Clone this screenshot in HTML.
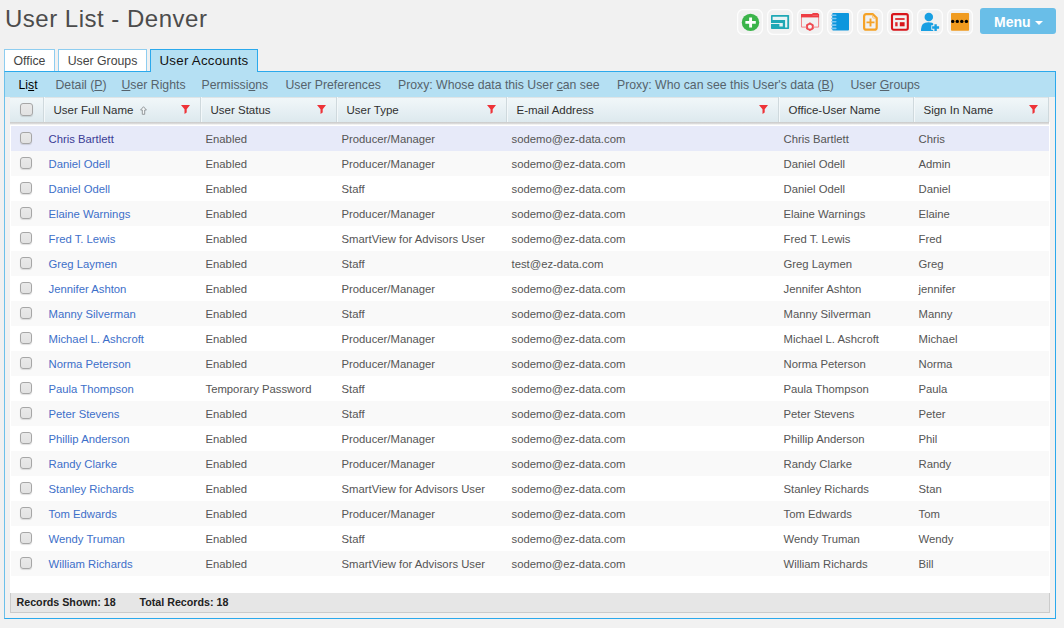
<!DOCTYPE html>
<html><head><meta charset="utf-8"><title>User List - Denver</title>
<style>
*{box-sizing:border-box;margin:0;padding:0}
html,body{width:1064px;height:628px;overflow:hidden}
body{background:#f1f1f1;font-family:"Liberation Sans",sans-serif;font-size:12px;color:#555;position:relative}
h1{position:absolute;left:5px;top:4px;font-size:24px;font-weight:normal;color:#4c4c4c;line-height:30px;white-space:nowrap;letter-spacing:0.5px}
.tools{position:absolute;left:737px;top:9px;width:236px;height:26px}
.menu{position:absolute;left:980px;top:8px;width:76px;height:26px;background:#69bee8;border-radius:3px;color:#fff;font-weight:bold;font-size:14px;line-height:26px;padding:1px 0 0 14px}
.menu i{position:absolute;left:54.8px;top:13px;border:4px solid transparent;border-top:4px solid #fff;border-bottom:0}
.tab{position:absolute;top:49px;height:23px;border:1px solid #8ecdf0;border-bottom:0;background:#fff;font-size:12.3px;line-height:22px;color:#444;text-align:center;white-space:nowrap}
.tab.act{background:#b5e0f3;border-color:#2ba9ec;color:#111;z-index:2;font-size:13.3px;letter-spacing:0.25px}
.panel{position:absolute;left:4px;top:71px;width:1052px;height:548px;border:1px solid #2ba9ec;border-left-color:#6cc0ea}
.sub{position:absolute;left:0;top:0;width:1050px;height:25px;background:#b5e0f3;white-space:nowrap}
.sub span{position:absolute;top:0;line-height:27px;font-size:12.25px;color:#56636c}
.sub span.on{color:#000}
.hdr{position:absolute;left:5px;top:25px;width:1039px;height:25px;background:linear-gradient(#f1f7f9,#dde9ee);border-top:1px solid #dfe5e7}
.hdr .h{position:absolute;top:-1px;height:25px;line-height:26px;border-left:1px solid #cfd9dd;padding-left:9.5px;color:#303030;font-size:11.5px;white-space:nowrap;box-shadow:inset 1px 0 0 #f3f8fa}
.hdr .fn{position:absolute;top:7px}
.hdr .srt{position:absolute;left:95.5px;top:9px}
.shadow{position:absolute;left:5px;top:50px;width:1039px;height:3px;background:linear-gradient(#c9c9c9,#dcdcdc 55%,#fdfdfd)}
.grid{position:absolute;left:5px;top:50px;width:1040px;height:471px;background:#fff;padding:4px 1px 0}
.row{position:relative;height:25px;line-height:26px;background:#fff;white-space:nowrap}
.row.alt{background:#f9f9f9}
.row.sel{background:#e7eaf9}
.cb{position:absolute;left:9px;top:6px;width:12px;height:12px;border:1px solid #a6a6a6;border-radius:3px;background:linear-gradient(#e9e9e9,#e2e2e2);box-shadow:0 1px 1px rgba(0,0,0,.12)}
.hdr .cb{left:10px;top:5px;width:13px;height:13px}
.c{position:absolute;top:0;font-size:11.3px;color:#555}
.c1{left:37.5px;color:#3d6fc9} .sel .c1{color:#3b3c96}
.c2{left:194.5px} .c3{left:330.5px} .c4{left:500.5px} .c5{left:772.5px} .c6{left:907.5px}
.foot{position:absolute;left:5px;top:521px;width:1040px;height:20px;background:#e6e6e6;border:1px solid #cbcbcb;border-top:0;font-weight:bold;color:#222;font-size:10.7px;line-height:19px;white-space:nowrap}
.foot span{position:absolute;top:0}
</style></head><body>
<h1>User List - Denver</h1>
<div class="tools">
<svg width="236" height="26" viewBox="0 0 236 26">
 <g fill="none" stroke="#fdfdfd" stroke-width="1.3">
  <rect x="0.6" y="0.6" width="24.8" height="24.8" rx="5.5"/>
  <rect x="30.6" y="0.6" width="24.8" height="24.8" rx="5.5"/>
  <rect x="60.6" y="0.6" width="24.8" height="24.8" rx="5.5"/>
  <rect x="90.6" y="0.6" width="24.8" height="24.8" rx="5.5"/>
  <rect x="120.6" y="0.6" width="24.8" height="24.8" rx="5.5"/>
  <rect x="150.6" y="0.6" width="24.8" height="24.8" rx="5.5"/>
  <rect x="180.6" y="0.6" width="24.8" height="24.8" rx="5.5"/>
  <rect x="210.6" y="0.6" width="24.8" height="24.8" rx="5.5"/>
 </g>
 <!-- 1 add -->
 <circle cx="13.5" cy="13.4" r="8.7" fill="#3bb44a"/>
 <path d="M8.4 13.4H18.8M13.6 8.5V18.6" stroke="#fff" stroke-width="2.9" fill="none"/>
 <!-- 2 windows -->
 <g transform="translate(30 0)">
  <rect x="4" y="5.9" width="18.1" height="14" rx="0.7" fill="#1fa8b5"/>
  <path d="M5.6 7.8H20.3V18.6H18.1V11H5.6Z" fill="#e9f4f5"/>
  <path d="M4 14.1H15.8V17.6H12.4V15.1H4Z" fill="#e4f2f4"/>
 </g>
 <!-- 3 folder gear -->
 <g transform="translate(60 0)">
  <path d="M4.5 8V18.1H9.5M16.3 18.1H21.6V8" stroke="#f3777b" stroke-width="0.9" fill="none"/>
  <path d="M4 5H22.1V8.4H4Z" fill="#ee3d43"/>
  <path d="M15.2 5V4.8Q15.2 3.9 16.1 3.9H20.2Q21.2 3.9 21.6 5Z" fill="#ee3d43"/>
  <path d="M15.5 6.4H21" stroke="#f47478" stroke-width="0.7"/>
  <circle cx="12.9" cy="17.7" r="2.9" fill="none" stroke="#ee4a50" stroke-width="1.8"/>
  <path d="M12.9 13.6V21.8M9.35 15.65L16.45 19.75M16.45 15.65L9.35 19.75" stroke="#ee4a50" stroke-width="1.7"/>
  <circle cx="12.9" cy="17.7" r="2" fill="#f6f6f6"/>
 </g>
 <!-- 4 notebook -->
 <g transform="translate(90 0)">
  <rect x="5.2" y="4.1" width="16.8" height="17.3" rx="0.9" fill="#0c96dd"/>
  <g fill="#7cc5ee">
   <rect x="4" y="5.4" width="5.6" height="1.6" rx=".8"/>
   <rect x="4" y="8.7" width="5.6" height="1.6" rx=".8"/>
   <rect x="4" y="12" width="5.6" height="1.6" rx=".8"/>
   <rect x="4" y="15.3" width="5.6" height="1.6" rx=".8"/>
   <rect x="4" y="18.6" width="5.6" height="1.6" rx=".8"/>
  </g>
 </g>
 <!-- 5 doc plus -->
 <g transform="translate(120 0)">
  <path d="M9.3 5.2H15.9L19.7 9V18.4Q19.7 20.7 17.4 20.7H9.3Q7.1 20.7 7.1 18.4V7.4Q7.1 5.2 9.3 5.2Z" fill="none" stroke="#f5a226" stroke-width="2.2" stroke-linejoin="round"/>
  <path d="M15.6 5.6V8Q15.6 9.2 16.8 9.2H19.2" fill="none" stroke="#f8bd68" stroke-width="0.9"/>
  <path d="M13.5 9.4V17.4M9.5 13.4H17.5" stroke="#f5a226" stroke-width="1.9"/>
 </g>
 <!-- 6 layout -->
 <g transform="translate(150 0)">
  <rect x="5" y="5.1" width="15.8" height="15.6" rx="1.6" fill="none" stroke="#d8151b" stroke-width="2.1"/>
  <rect x="8.2" y="9.1" width="9.4" height="1.8" fill="#e0262b"/>
  <rect x="8.2" y="13.2" width="2.4" height="4.1" fill="#e0262b"/>
  <rect x="12.8" y="13.2" width="4.8" height="4.1" fill="#d8151b"/>
 </g>
 <!-- 7 user plus -->
 <g transform="translate(180 0)">
  <circle cx="11.8" cy="7.9" r="4.25" fill="#189fe2"/>
  <path d="M4 22V20.6Q4 13.3 11.4 13.3Q15.6 13.3 17.6 15.4V22Z" fill="#189fe2"/>
  <path d="M14.3 18.5H22.7M18.5 14.3V22.7" stroke="#f1f1f1" stroke-width="4.6"/>
  <path d="M15.1 18.5H22.1M18.6 15.2V21.9" stroke="#189fe2" stroke-width="2.4"/>
 </g>
 <!-- 8 more -->
 <g transform="translate(210 0)">
  <rect x="4" y="4.1" width="18.1" height="17.6" rx="0.8" fill="#f09b1f"/>
  <circle cx="5.7" cy="12.4" r="1.7" fill="#000"/>
  <circle cx="10.3" cy="12.4" r="1.7" fill="#000"/>
  <circle cx="14.8" cy="12.4" r="1.7" fill="#000"/>
  <circle cx="19.4" cy="12.4" r="1.7" fill="#000"/>
 </g>
</svg>

</div>
<div class="menu">Menu<i></i></div>
<div class="tab" style="left:4px;width:51px">Office</div>
<div class="tab" style="left:58px;width:89px">User Groups</div>
<div class="tab act" style="left:150px;width:108px">User Accounts</div>
<div class="panel">
 <div class="sub">
  <span class="on" style="left:13.5px">Li<u>s</u>t</span>
  <span style="left:50.5px">Detail (<u>P</u>)</span>
  <span style="left:116.5px"><u>U</u>ser Rights</span>
  <span style="left:196.5px">Permissi<u>o</u>ns</span>
  <span style="left:280.5px">User Preferences</span>
  <span style="left:393px">Proxy: Whose data this User <u>c</u>an see</span>
  <span style="left:612px">Proxy: Who can see this User's data (<u>B</u>)</span>
  <span style="left:845.5px">User <u>G</u>roups</span>
 </div>
 <div class="grid">
  <div class="row sel"><span class="cb"></span><a class="c c1">Chris Bartlett</a><span class="c c2">Enabled</span><span class="c c3">Producer/Manager</span><span class="c c4">sodemo@ez-data.com</span><span class="c c5">Chris Bartlett</span><span class="c c6">Chris</span></div>
  <div class="row alt"><span class="cb"></span><a class="c c1">Daniel Odell</a><span class="c c2">Enabled</span><span class="c c3">Producer/Manager</span><span class="c c4">sodemo@ez-data.com</span><span class="c c5">Daniel Odell</span><span class="c c6">Admin</span></div>
  <div class="row"><span class="cb"></span><a class="c c1">Daniel Odell</a><span class="c c2">Enabled</span><span class="c c3">Staff</span><span class="c c4">sodemo@ez-data.com</span><span class="c c5">Daniel Odell</span><span class="c c6">Daniel</span></div>
  <div class="row alt"><span class="cb"></span><a class="c c1">Elaine Warnings</a><span class="c c2">Enabled</span><span class="c c3">Producer/Manager</span><span class="c c4">sodemo@ez-data.com</span><span class="c c5">Elaine Warnings</span><span class="c c6">Elaine</span></div>
  <div class="row"><span class="cb"></span><a class="c c1">Fred T. Lewis</a><span class="c c2">Enabled</span><span class="c c3">SmartView for Advisors User</span><span class="c c4">sodemo@ez-data.com</span><span class="c c5">Fred T. Lewis</span><span class="c c6">Fred</span></div>
  <div class="row alt"><span class="cb"></span><a class="c c1">Greg Laymen</a><span class="c c2">Enabled</span><span class="c c3">Staff</span><span class="c c4">test@ez-data.com</span><span class="c c5">Greg Laymen</span><span class="c c6">Greg</span></div>
  <div class="row"><span class="cb"></span><a class="c c1">Jennifer Ashton</a><span class="c c2">Enabled</span><span class="c c3">Producer/Manager</span><span class="c c4">sodemo@ez-data.com</span><span class="c c5">Jennifer Ashton</span><span class="c c6">jennifer</span></div>
  <div class="row alt"><span class="cb"></span><a class="c c1">Manny Silverman</a><span class="c c2">Enabled</span><span class="c c3">Staff</span><span class="c c4">sodemo@ez-data.com</span><span class="c c5">Manny Silverman</span><span class="c c6">Manny</span></div>
  <div class="row"><span class="cb"></span><a class="c c1">Michael L. Ashcroft</a><span class="c c2">Enabled</span><span class="c c3">Producer/Manager</span><span class="c c4">sodemo@ez-data.com</span><span class="c c5">Michael L. Ashcroft</span><span class="c c6">Michael</span></div>
  <div class="row alt"><span class="cb"></span><a class="c c1">Norma Peterson</a><span class="c c2">Enabled</span><span class="c c3">Producer/Manager</span><span class="c c4">sodemo@ez-data.com</span><span class="c c5">Norma Peterson</span><span class="c c6">Norma</span></div>
  <div class="row"><span class="cb"></span><a class="c c1">Paula Thompson</a><span class="c c2">Temporary Password</span><span class="c c3">Staff</span><span class="c c4">sodemo@ez-data.com</span><span class="c c5">Paula Thompson</span><span class="c c6">Paula</span></div>
  <div class="row alt"><span class="cb"></span><a class="c c1">Peter Stevens</a><span class="c c2">Enabled</span><span class="c c3">Staff</span><span class="c c4">sodemo@ez-data.com</span><span class="c c5">Peter Stevens</span><span class="c c6">Peter</span></div>
  <div class="row"><span class="cb"></span><a class="c c1">Phillip Anderson</a><span class="c c2">Enabled</span><span class="c c3">Producer/Manager</span><span class="c c4">sodemo@ez-data.com</span><span class="c c5">Phillip Anderson</span><span class="c c6">Phil</span></div>
  <div class="row alt"><span class="cb"></span><a class="c c1">Randy Clarke</a><span class="c c2">Enabled</span><span class="c c3">Producer/Manager</span><span class="c c4">sodemo@ez-data.com</span><span class="c c5">Randy Clarke</span><span class="c c6">Randy</span></div>
  <div class="row"><span class="cb"></span><a class="c c1">Stanley Richards</a><span class="c c2">Enabled</span><span class="c c3">SmartView for Advisors User</span><span class="c c4">sodemo@ez-data.com</span><span class="c c5">Stanley Richards</span><span class="c c6">Stan</span></div>
  <div class="row alt"><span class="cb"></span><a class="c c1">Tom Edwards</a><span class="c c2">Enabled</span><span class="c c3">Producer/Manager</span><span class="c c4">sodemo@ez-data.com</span><span class="c c5">Tom Edwards</span><span class="c c6">Tom</span></div>
  <div class="row"><span class="cb"></span><a class="c c1">Wendy Truman</a><span class="c c2">Enabled</span><span class="c c3">Staff</span><span class="c c4">sodemo@ez-data.com</span><span class="c c5">Wendy Truman</span><span class="c c6">Wendy</span></div>
  <div class="row alt"><span class="cb"></span><a class="c c1">William Richards</a><span class="c c2">Enabled</span><span class="c c3">SmartView for Advisors User</span><span class="c c4">sodemo@ez-data.com</span><span class="c c5">William Richards</span><span class="c c6">Bill</span></div>
 </div>
 <div class="shadow"></div>
 <div class="hdr">
  <span class="cb"></span>
  <div class="h" style="left:33px;width:157px">User Full Name<svg class="srt" width="7" height="9" viewBox="0 0 7 9"><path d="M3.5 0.7L6.4 4H4.7V8.3H2.3V4H0.6Z" fill="#f4f7f8" stroke="#8a8f92" stroke-width="0.9"/></svg></div><svg class="fn" style="left:171px" width="9" height="9" viewBox="0 0 9 9"><path d="M0 0H9L5.7 4.3V7.4L3.5 9V4.3Z" fill="#ee3338"/></svg>
  <div class="h" style="left:190px;width:136px">User Status</div><svg class="fn" style="left:307px" width="9" height="9" viewBox="0 0 9 9"><path d="M0 0H9L5.7 4.3V7.4L3.5 9V4.3Z" fill="#ee3338"/></svg>
  <div class="h" style="left:326px;width:170px">User Type</div><svg class="fn" style="left:477px" width="9" height="9" viewBox="0 0 9 9"><path d="M0 0H9L5.7 4.3V7.4L3.5 9V4.3Z" fill="#ee3338"/></svg>
  <div class="h" style="left:496px;width:272px">E-mail Address</div><svg class="fn" style="left:749px" width="9" height="9" viewBox="0 0 9 9"><path d="M0 0H9L5.7 4.3V7.4L3.5 9V4.3Z" fill="#ee3338"/></svg>
  <div class="h" style="left:768px;width:135px">Office-User Name</div>
  <div class="h" style="left:903px;width:136px;border-right:1px solid #cfd9dd">Sign In Name</div><svg class="fn" style="left:1019px" width="9" height="9" viewBox="0 0 9 9"><path d="M0 0H9L5.7 4.3V7.4L3.5 9V4.3Z" fill="#ee3338"/></svg>
 </div>
 <div class="foot"><span style="left:5.5px">Records Shown: 18</span><span style="left:128.5px">Total Records: 18</span></div>
</div>
</body></html>
